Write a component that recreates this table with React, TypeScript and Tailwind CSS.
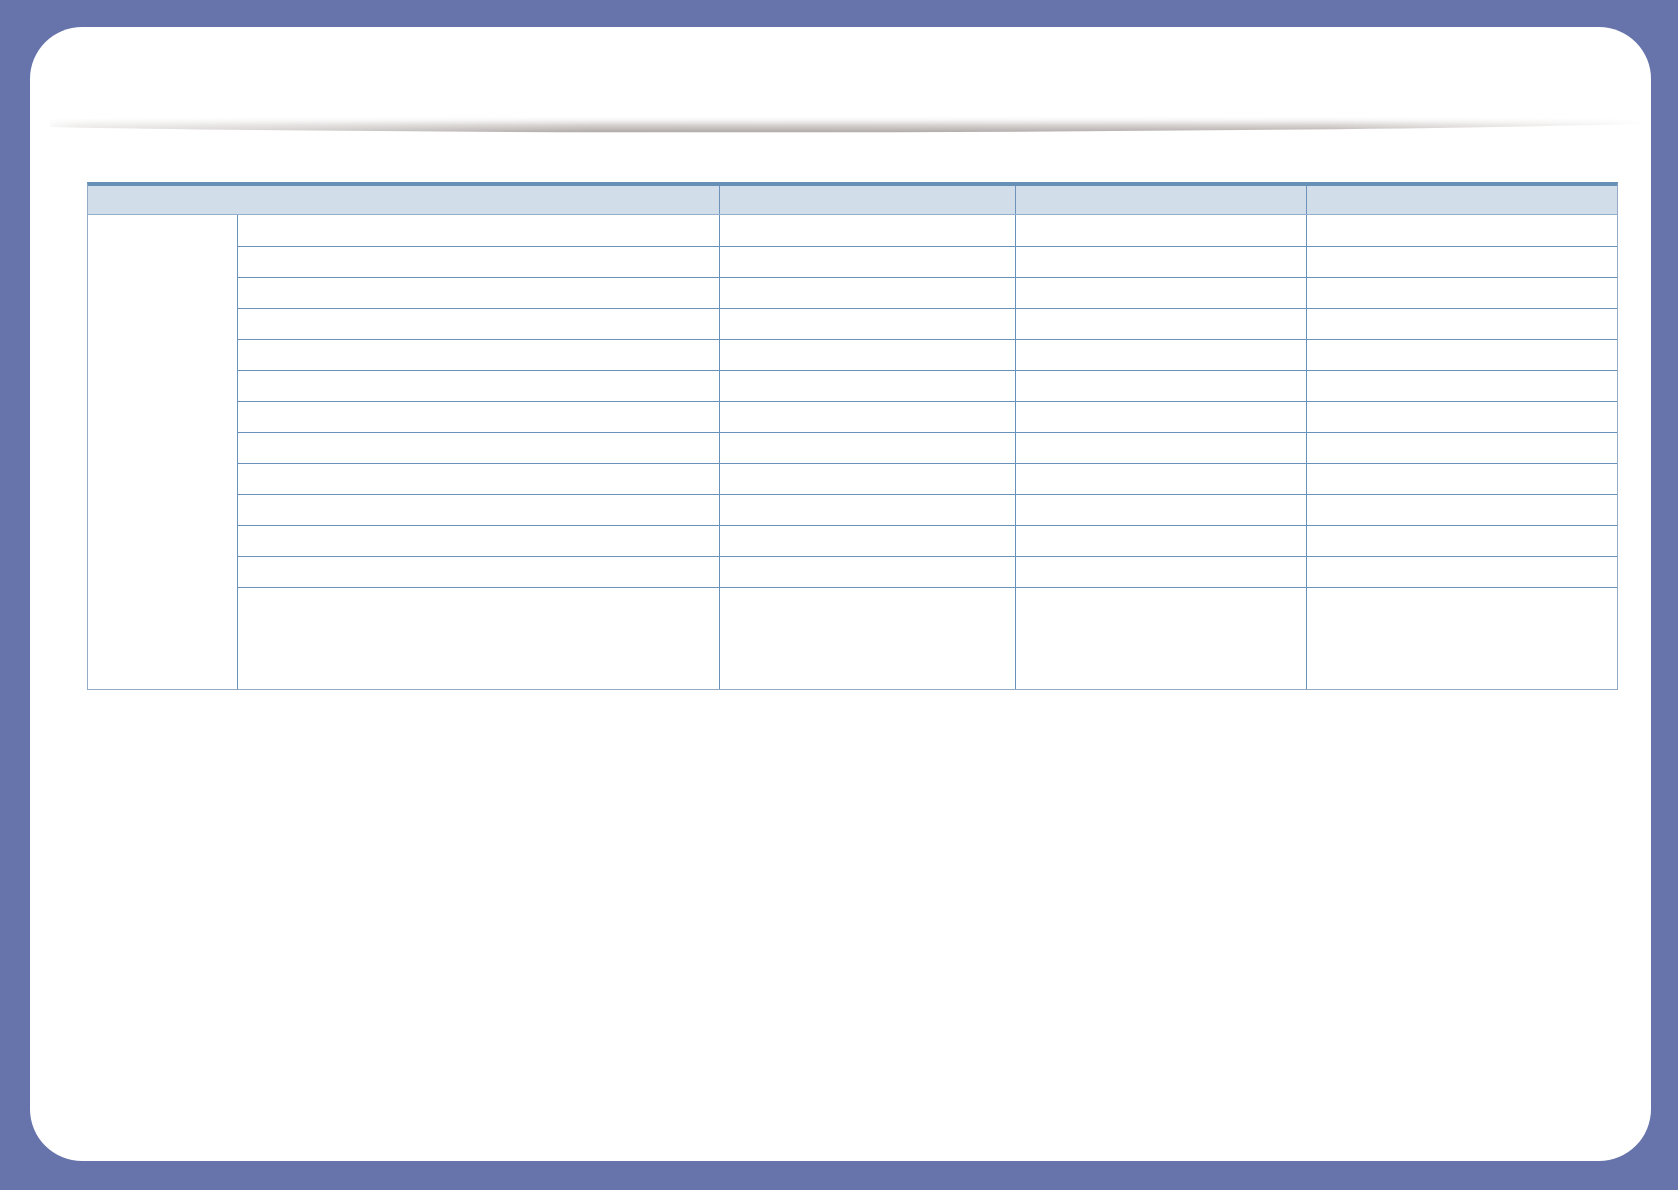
import React from "react";

const rowHeights = [32, 31, 31, 31, 31, 31, 31, 31, 31, 31, 31, 31];

function Shadow() {
  return (
    <svg width="1621" height="30" viewBox="0 0 1621 30" className="block">
      <defs>
        <linearGradient id="sv" x1="0" y1="0" x2="0" y2="1">
          <stop offset="0" stopColor="#ffffff" stopOpacity="0" />
          <stop offset="0.55" stopColor="#d8d4d2" />
          <stop offset="1" stopColor="#aea8a6" />
        </linearGradient>
        <linearGradient id="sh" x1="0" y1="0" x2="1" y2="0">
          <stop offset="0" stopColor="#000" />
          <stop offset="0.03" stopColor="#555" />
          <stop offset="0.35" stopColor="#fff" />
          <stop offset="0.8" stopColor="#eee" />
          <stop offset="0.97" stopColor="#333" />
          <stop offset="1" stopColor="#000" />
        </linearGradient>
        <mask id="sm">
          <rect x="0" y="0" width="1621" height="30" fill="url(#sh)" />
        </mask>
      </defs>
      <path
        d="M20,7 C 400,2 1200,2 1612,7 L 1612,12 C 1200,22 400,23 20,15 Z"
        fill="url(#sv)"
        mask="url(#sm)"
      />
    </svg>
  );
}

export default function App() {
  return (
    <div className="w-[1678px] h-[1190px] bg-[#6674ab] pt-[27px] pl-[30px] overflow-hidden font-['Liberation_Sans',sans-serif]">
      <div className="w-[1621px] h-[1134px] bg-white rounded-[52px] flex flex-col">
        <div className="mt-[85px]">
          <Shadow />
        </div>
        <div className="mt-[40px] ml-[57px] w-[1531px] border-t-4 border-t-[#6690b5] border-l border-r border-b border-l-[#94abc8] border-r-[#94abc8] border-b-[#94abc8]">
          <div className="flex h-[29px] bg-[#d1dde9] border-b border-b-[#93b0cd]">
            <div className="w-[632px] border-r border-r-[#6d93ba]" />
            <div className="w-[296px] border-r border-r-[#6d93ba]" />
            <div className="w-[291px] border-r border-r-[#6d93ba]" />
            <div className="w-[310px]" />
          </div>
          <div className="flex">
            <div className="w-[150px] border-r border-r-[#6a91b9]" />
            <div className="flex flex-col w-[1379px]">
              {rowHeights.map((h, i) => (
                <div
                  key={i}
                  className="flex border-b border-b-[#6a91b9]"
                  style={{ height: h }}
                >
                  <div className="w-[482px] border-r border-r-[#6a91b9]" />
                  <div className="w-[296px] border-r border-r-[#6a91b9]" />
                  <div className="w-[291px] border-r border-r-[#6a91b9]" />
                  <div className="w-[310px]" />
                </div>
              ))}
              <div className="flex h-[101px]">
                <div className="w-[482px] border-r border-r-[#6a91b9]" />
                <div className="w-[296px] border-r border-r-[#6a91b9]" />
                <div className="w-[291px] border-r border-r-[#6a91b9]" />
                <div className="w-[310px]" />
              </div>
            </div>
          </div>
        </div>
      </div>
    </div>
  );
}
